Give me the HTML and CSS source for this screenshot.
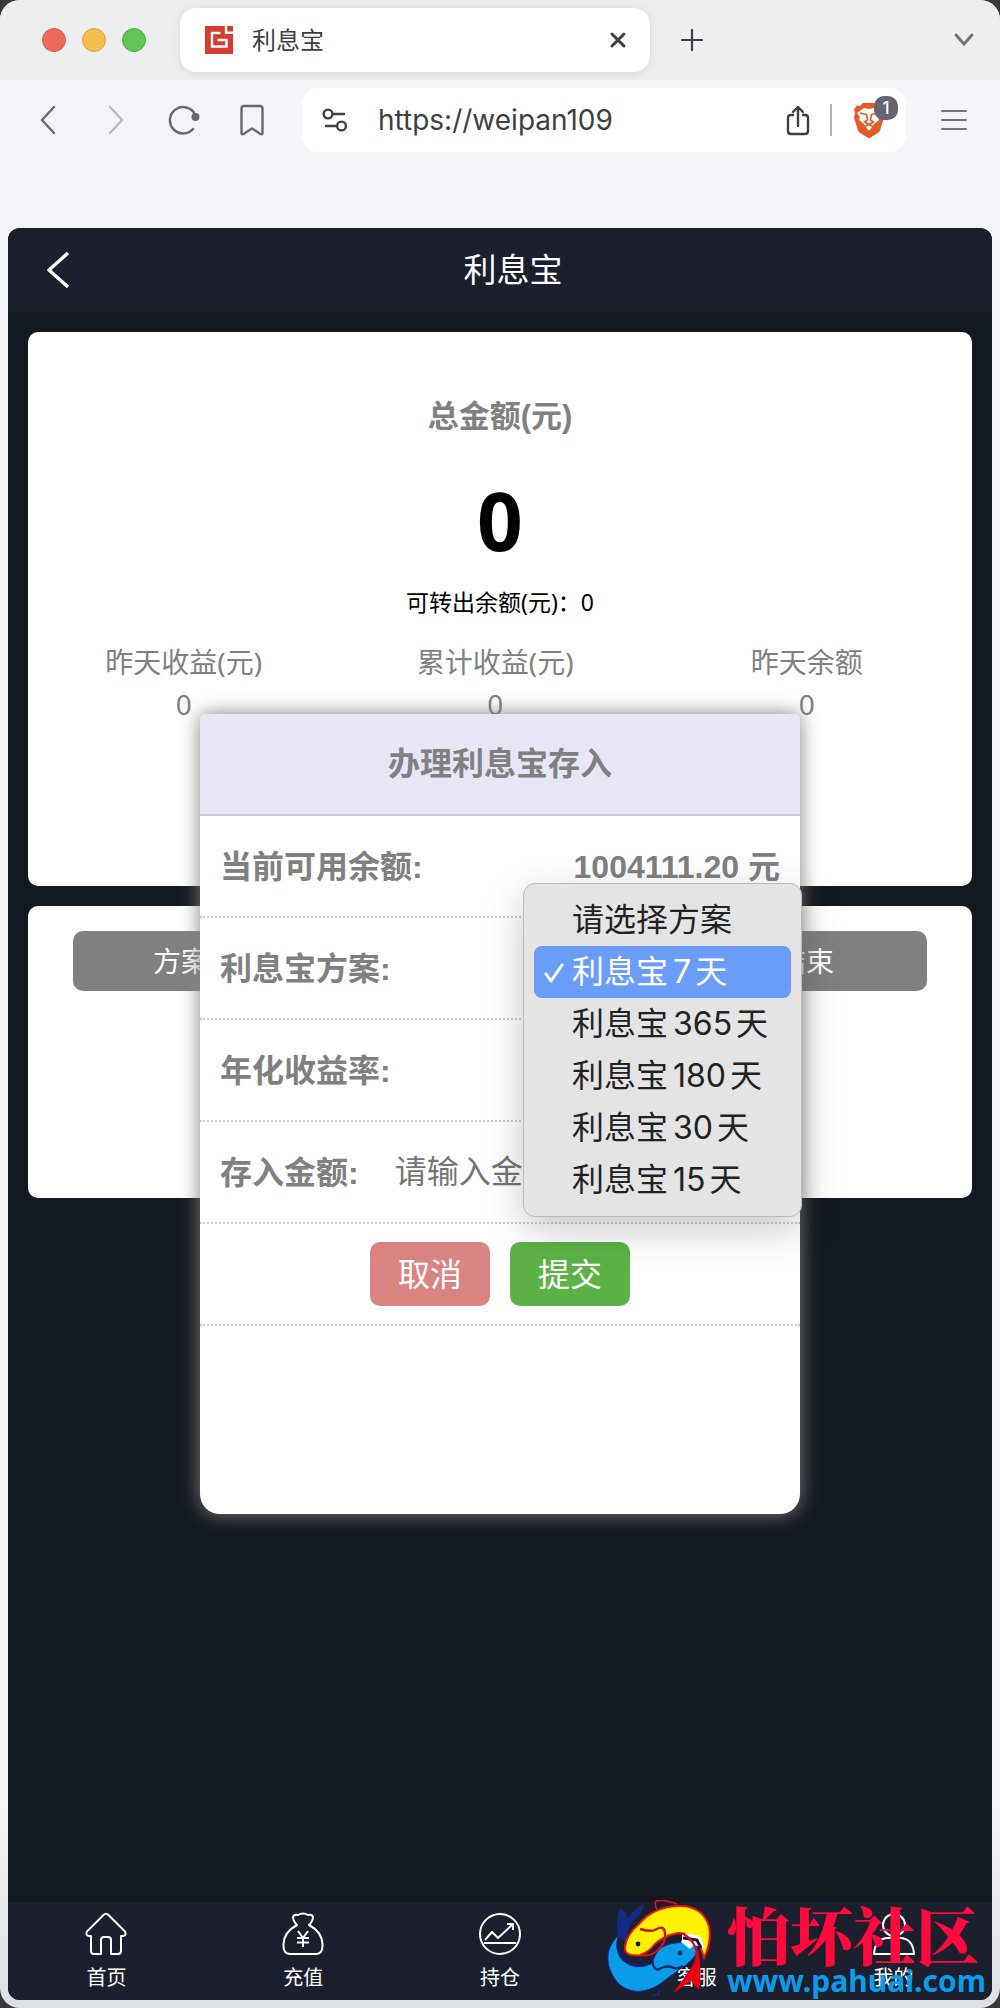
FILE: index.html
```html
<!doctype html>
<html lang="zh-CN">
  <head>
    <meta charset="utf-8">
    <meta name="viewport" content="width=device-width, initial-scale=1">
    <title>利息宝</title>
    <link rel="stylesheet" href="styles.css">
  </head>
  <body>
    <div class="window">
      <div class="tabstrip">
        <span class="light red"></span>
        <span class="light yellow"></span>
        <span class="light green"></span>
        <div class="tab">
          <svg class="favicon" width="28" height="28" viewBox="0 0 28 28" fill="none">
            <path fill="#d53b2f" d="M0 0h28v28H0z"/>
            <path stroke="#fff" stroke-width="2.4" d="M15.500 7H7v13.500h14.500v-6.500h-9M21 0v6.800h7"/>
          </svg>
          <span class="tab-title">利息宝</span>
          <button class="icon" aria-label="关闭标签页">
            <svg width="18" height="18" viewBox="0 0 18 18" stroke="#3c3f43" stroke-width="3" stroke-linecap="round"><path d="M3 3l12 12M15 3L3 15"/></svg>
          </button>
        </div>
        <button class="icon new-tab" aria-label="新标签页">
          <svg width="22" height="22" viewBox="0 0 22 22" stroke="#3c3f43" stroke-width="2.200" stroke-linecap="round"><path d="M11 1v20M1 11h20"/></svg>
        </button>
        <button class="icon tab-list" aria-label="标签页列表">
          <svg width="22" height="14" viewBox="0 0 22 14" fill="none" stroke="#707478" stroke-width="3" stroke-linecap="round"><path d="M3 2l8 9 8-9"/></svg>
        </button>
      </div>

      <div class="toolbar">
        <button class="icon" aria-label="后退">
          <svg width="16" height="30" viewBox="0 0 16 30" fill="none" stroke="#66696d" stroke-width="2.400" stroke-linecap="round" stroke-linejoin="round"><path d="M14 2L2 15l12 13"/></svg>
        </button>
        <button class="icon" aria-label="前进">
          <svg width="16" height="30" viewBox="0 0 16 30" fill="none" stroke="#b9bcc0" stroke-width="2.400" stroke-linecap="round" stroke-linejoin="round"><path d="M2 2l12 13L2 28"/></svg>
        </button>
        <button class="icon" aria-label="重新加载">
          <svg width="32" height="30" viewBox="0 0 32 30" fill="none" stroke="#66696d" stroke-width="2.400" stroke-linecap="round"><path d="M27 9.500A13.200 13.200 0 1 0 25 24"/><circle cx="27.500" cy="12" r="4" fill="#66696d" stroke="none"/></svg>
        </button>
        <button class="icon" aria-label="书签">
          <svg width="24" height="32" viewBox="0 0 24 32" fill="none" stroke="#66696d" stroke-width="2.400" stroke-linejoin="round"><path d="M4 2h16q2.500 0 2.500 3v24q0 2-2 1L12 24.500 3.500 30q-2 1-2-1V5q0-3 2.500-3z"/></svg>
        </button>
        <div class="urlbar">
          <svg width="26" height="24" viewBox="0 0 26 24" fill="none" stroke="#3c3f43" stroke-width="2.400" stroke-linecap="round"><circle cx="6" cy="6" r="4.400"/><path d="M11 6h11M4 18h10"/><circle cx="19.500" cy="18" r="4.400"/></svg>
          <input class="url" type="text" aria-label="地址" value="https://weipan109">
          <button class="icon" aria-label="分享">
            <svg width="24" height="32" viewBox="0 0 24 32" fill="none" stroke="#3c3f43" stroke-width="2.400" stroke-linecap="round" stroke-linejoin="round"><path d="M12 22V3M7 8l5-5 5 5M7 11H5q-3 0-3 3v13q0 3 3 3h14q3 0 3-3V14q0-3-3-3h-2"/></svg>
          </button>
          <span class="divider"></span>
          <button class="icon shield" aria-label="防护">
            <svg width="30" height="36" viewBox="0 0 30 36">
              <path fill="#e65a27" d="M9 1h12l3 3 3-.500 3 4-1 4 1 4-4 13q-1 2-3 3l-8 5-8-5q-2-1-3-3L0 15.500l1-4-1-4 3-4L6 4z"/>
              <path fill="#fff" d="M10 6l5 1 5-1 6 5-2 4 1 3-5 4-1 2-4 5-4-5-1-2-5-4 1-3-3-4z"/>
              <path fill="none" stroke="#e65a27" stroke-width="1.600" d="M6 11l6 1.500M24 11l-6 1.500M12.500 12l1 6-3 2 4.500 2.500 4.500-2.500-3-2 1-6M10 25l5-2.500 5 2.500"/>
            </svg>
            <span class="badge">1</span>
          </button>
        </div>
        <button class="icon" aria-label="菜单">
          <svg width="28" height="22" viewBox="0 0 28 22" stroke="#707478" stroke-width="2" stroke-linecap="round"><path d="M2 2h24M2 11h24M2 20h24"/></svg>
        </button>
      </div>

      <div class="app">
        <header class="header">
          <button class="icon back" aria-label="返回">
            <svg width="24" height="38" viewBox="0 0 24 38" fill="none" stroke="#fff" stroke-width="3.400" stroke-linejoin="round"><path d="M22 2L3 19l19 17"/></svg>
          </button>
          <h1>利息宝</h1>
        </header>

        <main class="content">
          <section class="card summary">
            <h2>总金额(元)</h2>
            <p class="total">0</p>
            <p class="available">可转出余额(元)：0</p>
            <div class="stats">
              <div>昨天收益(元)<br>0</div>
              <div>累计收益(元)<br>0</div>
              <div>昨天余额<br>0</div>
            </div>
          </section>

          <section class="card plans">
            <div class="plans-head">
              <span>方案</span>
              <span>结束</span>
            </div>
          </section>
        </main>

        <form class="modal">
          <h3>办理利息宝存入</h3>
          <div class="row">
            <span>当前可用余额:</span>
            <span>1004111.20 元</span>
          </div>
          <div class="row">
            <label for="plan">利息宝方案:</label>
            <select id="plan">
              <option>请选择方案</option>
              <option selected>利息宝7天</option>
              <option>利息宝365天</option>
              <option>利息宝180天</option>
              <option>利息宝30天</option>
              <option>利息宝15天</option>
            </select>
            <ul class="menu" role="listbox" aria-label="利息宝方案">
              <li role="option">请选择方案</li>
              <li role="option" class="selected" aria-selected="true">
                <svg width="20" height="20" viewBox="0 0 20 20" fill="none" stroke="#fff" stroke-width="3" stroke-linecap="round" stroke-linejoin="round"><path d="M2 11l5 7L18 2"/></svg>利息宝<b>7</b>天</li>
              <li role="option">利息宝<b>365</b>天</li>
              <li role="option">利息宝<b>180</b>天</li>
              <li role="option">利息宝<b>30</b>天</li>
              <li role="option">利息宝<b>15</b>天</li>
            </ul>
          </div>
          <div class="row">
            <span>年化收益率:</span>
          </div>
          <div class="row">
            <label for="amount">存入金额:</label>
            <input id="amount" type="text" placeholder="请输入金额">
          </div>
          <div class="row actions">
            <button type="button" class="btn cancel">取消</button>
            <button type="button" class="btn submit">提交</button>
          </div>
        </form>

        <nav class="nav">
          <a href="#">
            <svg width="44" height="44" viewBox="0 0 44 44"><path d="M19.500 3Q22 .500 24.500 3L41 19.500q2 4-2 4.500h-2v15q0 3-3 3h-7V28q0-3-3-3h-4q-3 0-3 3v14h-7q-3 0-3-3V24H5q-4-.500-2-4.500z"/></svg>
            首页
          </a>
          <a href="#">
            <svg width="44" height="44" viewBox="0 0 44 44"><path d="M16 13Q12 9 12 5q1-3 5-2 5-3 10 0 4-1 5 2 0 4-4 8 13 7 13.500 19 .500 10-6.500 10H9q-7 0-6.500-10Q3 20 16 13zM17 19l5 7 5-7M16 26h12M16 30.500h12M22 26v9"/></svg>
            充值
          </a>
          <a href="#">
            <svg width="44" height="44" viewBox="0 0 44 44"><circle cx="22" cy="22" r="20"/><path d="M7 28l7-8 6 6 15-14M29 12h6v6M6 31h32"/></svg>
            持仓
          </a>
          <a href="#">
            <svg width="44" height="44" viewBox="0 0 44 44"><path d="M11 24v-5a10 10 0 0 1 20 0v5M8 22h5v10h-2q-3 0-3-3zM34 22h-5v10h2q3 0 3-3z"/></svg>
            客服
          </a>
          <a href="#">
            <svg width="44" height="44" viewBox="0 0 44 44"><circle cx="22" cy="13" r="11"/><path d="M2 42q1-15 13-16h14q12 1 13 16z"/></svg>
            我的
          </a>
        </nav>

        <div class="watermark">
          <svg width="106" height="98" viewBox="0 0 106 98">
            <path fill="#142a82" d="M11 37C8 25 11 15 13 8q5 2 8 10Q29 6 37 4q-2 10-9 15-7 6-9 22z"/>
            <path fill="none" stroke="#e8131d" stroke-width="1.500" d="M50 10Q47 3 49 1q8-2 21 3"/>
            <path fill="#101d5e" d="M20 40Q14 52 24 62q14 6 30-4l38-28-4 14-30 30-34 4-14-20z"/>
            <path fill="#0a9ce8" stroke="#142a9a" d="M11 36C-4 50-1 70 12 84c14 12 32 8 46-4L80 64c10-8 12-14 9-20-12-3-30-2-39 7q-7 7-4 12Q28 72 15 60 7 50 11 36z"/>
            <path fill="none" stroke="#14266e" stroke-width="2.400" d="M50 51q-6 8-4 14 3 7 8 3 8-3 13 0 5 1 9-2M52 89v6h-6"/>
            <path fill="#fff200" stroke="#e8131d" stroke-width="2" d="M37 55Q16 58 18 46q2-12 14-22Q46 7 71 6q24-1 31 20 3 16-5 32-4-16-12-22-10-5-22-1-10 4-16 10-5 7-14 10z"/>
            <path fill="none" stroke="#c6151c" stroke-width="2.400" d="M33 29q10 3 15 1 9-6 10 3 2 8-7 17-6 6-14 5"/>
            <path fill="#fff" d="M74 42l5-9 14 3 5 12-11-3-4 4z"/>
            <path fill="none" stroke="#151b33" stroke-width="3" d="M76 38l14 2 4 8"/>
            <path fill="#e60012" d="M68 32q17-1 24 22 3 18 0 36l-8-9-18 12q9-12 16-22 9-12 6-22-5-13-20-17z"/>
            <circle cx="31" cy="44" r="2.400" fill="#151515"/><circle cx="73" cy="53" r="2.400" fill="#142a5a"/>
          </svg>
          <div class="watermark-text">
            <strong>怕坏社区</strong>
            <span>www.pahuai.com</span>
          </div>
        </div>
      </div>
    </div>
  </body>
</html>
```
FILE: styles.css
```css
* { box-sizing: border-box; }

body {
  margin: 0;
  background: #3a3a3c;
  font-family: "Noto Sans", "Noto Sans CJK SC", sans-serif;
}

h1, h2, h3, p, ul {
  margin: 0;
  padding: 0;
}

button, input, select {
  font: inherit;
  border: 0;
  background: none;
  padding: 0;
}

svg { display: block; }

.icon {
  display: flex;
  align-items: center;
  justify-content: center;
  flex: none;
  cursor: pointer;
}

/* browser window */
.window {
  display: flex;
  flex-direction: column;
  min-height: 100vh;
  padding-bottom: 8px;
  border-radius: 20px;
  overflow: hidden;
  background: linear-gradient(#f3f4f7 90%, #dcdfe3);
}

.tabstrip {
  display: flex;
  align-items: center;
  gap: 16px;
  height: 80px;
  padding: 0 25px 0 42px;
  background: #edeef0;
}

.light {
  width: 24px;
  height: 24px;
  border-radius: 50%;
}

.red { background: #ec6a5e; border: 1px solid #d35a50; }
.yellow { background: #f5bf4f; border: 1px solid #d8a541; }
.green { background: #61c554; border: 1px solid #52a844; }

.tab {
  display: flex;
  align-items: center;
  flex: 0 1 470px;
  height: 64px;
  margin-left: 18px;
  padding: 0 23px 0 25px;
  border-radius: 16px;
  background: #fff;
  box-shadow: 0 1px 8px rgba(0, 0, 0, .1);
}

.tab-title {
  flex: 1;
  margin-left: 19px;
  padding-bottom: 4px;
  font-size: 24px;
  color: #3c3f43;
}

.new-tab { margin-left: 15px; }
.tab-list { margin-left: auto; }

.toolbar {
  display: flex;
  align-items: center;
  gap: 40px;
  height: 148px;
  padding: 8px 32px 76px 40px;
}

.toolbar > .icon:first-child { margin-right: 12px; }
.toolbar > .icon:nth-child(2) { margin-right: 4px; }

.urlbar {
  display: flex;
  align-items: center;
  flex: 1;
  min-width: 0;
  height: 64px;
  margin: 0 -6px 0 -2px;
  padding: 0 22px 0 20px;
  border-radius: 16px;
  background: #fff;
}

.url {
  flex: 1;
  min-width: 0;
  margin-left: 30px;
  font-family: Inter, sans-serif;
  font-size: 28px;
  color: #3c3f43;
}

.divider {
  width: 2px;
  height: 32px;
  margin: 0 22px 0 20px;
  background: #b0b2b5;
}

.shield { position: relative; }

.badge {
  position: absolute;
  top: -6px;
  right: -14px;
  width: 24px;
  height: 24px;
  border-radius: 10px;
  background: #62656f;
  color: #fff;
  font: 500 17px/24px Inter, sans-serif;
  text-align: center;
}

/* page */
.app {
  position: relative;
  display: flex;
  flex-direction: column;
  flex: 1;
  margin: 0 8px;
  border-radius: 12px;
  overflow: hidden;
  background: #131920;
}

.header {
  display: flex;
  align-items: center;
  height: 84px;
  padding-right: 74px;
  background: #1b1f2e;
  color: #fff;
}

.back { width: 100px; }

.header h1 {
  flex: 1;
  padding-bottom: 4px;
  font-size: 33px;
  font-weight: 400;
  text-align: center;
}

.content {
  display: flex;
  flex-direction: column;
  gap: 20px;
  padding: 20px 20px 0;
}

.card {
  border-radius: 10px;
  background: #fff;
}

.summary {
  min-height: 554px;
  padding-top: 61px;
  text-align: center;
  color: #808080;
}

.summary h2 {
  font-family: "Liberation Sans", "Noto Sans CJK SC", sans-serif;
  font-size: 31px;
  line-height: 48px;
}

.total {
  margin-top: 31px;
  font-size: 80px;
  font-weight: 700;
  line-height: 96px;
  color: #000;
}

.available {
  margin-top: 14px;
  font-size: 23px;
  line-height: 40px;
  color: #000;
}

.stats {
  display: flex;
  margin-top: 19px;
  font-size: 28px;
  line-height: 42px;
}

.stats div { width: 33%; }

.plans {
  min-height: 292px;
  padding: 25px 45px;
}

.plans-head {
  display: flex;
  justify-content: space-between;
  padding: 0 93px 0 80px;
  border-radius: 10px;
  background: #808080;
  color: #fff;
  font-size: 28px;
  line-height: 60px;
}

/* deposit dialog */
.modal {
  position: absolute;
  top: 486px;
  left: 50%;
  width: 600px;
  height: 800px;
  margin-left: -300px;
  border-radius: 6px 6px 20px 20px;
  background: #fff;
  box-shadow: 0 0 20px #808080;
  color: #808080;
  font-family: "Liberation Sans", "Noto Sans CJK SC", sans-serif;
  font-size: 32px;
}

.modal h3 {
  border-bottom: 2px solid #ccccd4;
  border-radius: 6px 6px 0 0;
  background: #e6e6f7;
  font-size: 32px;
  line-height: 100px;
  text-align: center;
}

.row {
  position: relative;
  display: flex;
  align-items: center;
  justify-content: space-between;
  height: 102px;
  padding: 0 20px;
  border-bottom: 2px dotted #ccc;
  font-weight: 700;
}

.row > span,
.row > label { padding-bottom: 4px; }

.row input,
.row select {
  flex: 1;
  min-width: 0;
  font-weight: 400;
  color: #808080;
}

.row input { margin-left: 36px; }
.row input::placeholder { color: #757575; }

.row select {
  flex: none;
  width: 200px;
  appearance: none;
}

.actions {
  justify-content: center;
  gap: 20px;
}

.btn {
  width: 120px;
  height: 64px;
  padding-bottom: 4px;
  border-radius: 10px;
  color: #fff;
  font-weight: 400;
  cursor: pointer;
}

.cancel { background: #d98480; }
.submit { background: #5cb247; }

.menu {
  position: absolute;
  z-index: 1;
  top: -35px;
  right: -2px;
  width: 279px;
  padding: 10px;
  border: 1px solid #b9b9b9;
  border-radius: 12px;
  background: #e4e4e4;
  box-shadow: 0 12px 40px rgba(0, 0, 0, .22);
  color: #222;
  font-family: Inter, "Noto Sans CJK SC", sans-serif;
  font-size: 32px;
  font-weight: 400;
  line-height: 52px;
  list-style: none;
}

.menu li {
  position: relative;
  padding-left: 38px;
  border-radius: 8px;
  white-space: nowrap;
}

.menu b {
  margin: 0 4px 0 5px;
  font-weight: 400;
}

.menu .selected {
  background: #6a9df8;
  color: #fff;
}

.menu svg {
  position: absolute;
  top: 17px;
  left: 10px;
}

/* bottom navigation */
.nav {
  display: flex;
  height: 98px;
  margin-top: auto;
  background: #1b1f2e;
}

.nav a {
  display: flex;
  flex: 1;
  flex-direction: column;
  align-items: center;
  padding-top: 10px;
  color: #fff;
  font-size: 20px;
  line-height: 44px;
  text-decoration: none;
}

.nav svg {
  fill: none;
  stroke: #fff;
  stroke-width: 2;
  stroke-linejoin: round;
}

.watermark {
  position: absolute;
  right: 6px;
  bottom: 2px;
  display: flex;
  align-items: flex-end;
  gap: 14px;
}

.watermark-text {
  display: flex;
  flex-direction: column;
}

.watermark strong {
  color: #ff0a3c;
  font-family: "Noto Serif CJK SC", "Noto Sans CJK SC", serif;
  font-size: 63px;
  font-weight: 900;
  line-height: 62px;
}

.watermark span {
  color: #0a9ce8;
  font-size: 30px;
  font-weight: 700;
  line-height: 34px;
}
```
